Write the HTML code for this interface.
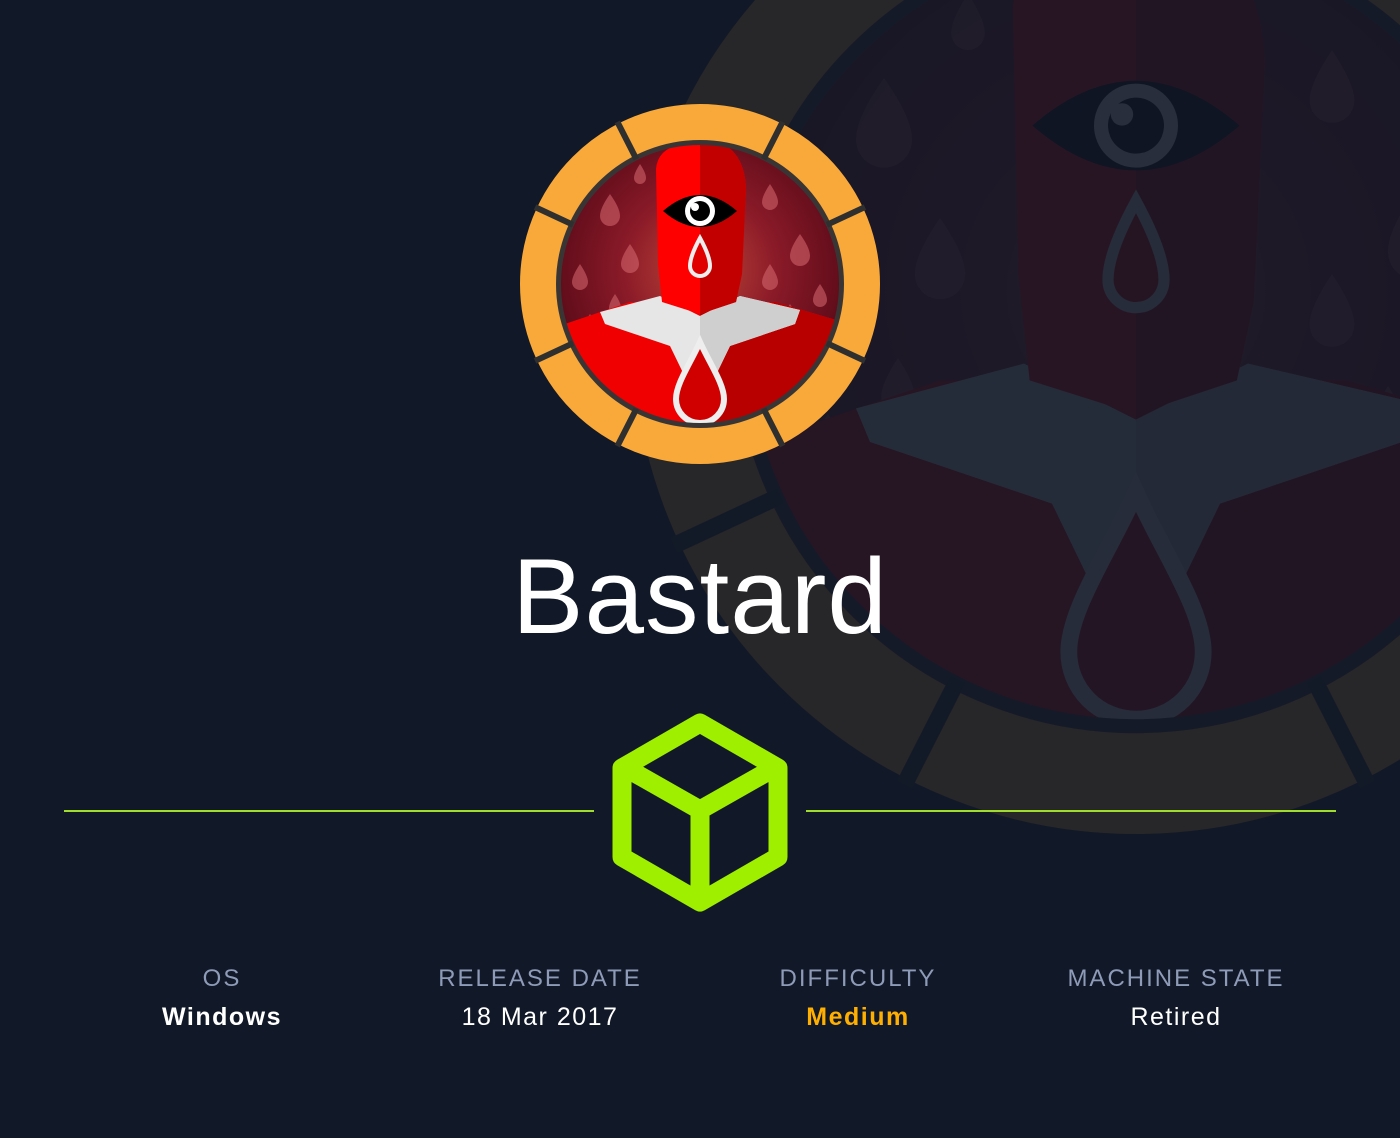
<!DOCTYPE html>
<html><head><meta charset="utf-8"><style>
html,body{margin:0;padding:0;}
body{width:1400px;height:1138px;background:#111827;position:relative;overflow:hidden;font-family:"Liberation Sans",sans-serif;}
.abs{position:absolute;}
.title{left:0;width:1400px;top:536px;text-align:center;font-size:107px;color:#fff;letter-spacing:1px;line-height:120px;}
.line{height:2px;background:#9fdc2c;top:810px;}
.col{position:absolute;width:320px;text-align:center;top:964px;}
.lab{font-size:24px;letter-spacing:2px;color:#8e9bb8;line-height:30px;}
.val{font-size:25px;letter-spacing:1.5px;color:#fff;font-weight:bold;line-height:30px;margin-top:8px;}
</style></head><body>
<svg width="0" height="0" style="position:absolute">
<defs>
<radialGradient id="bgg" cx="50%" cy="45%" r="55%"><stop offset="0" stop-color="#c04838"/><stop offset="0.5" stop-color="#8a1a28"/><stop offset="1" stop-color="#5a0a18"/></radialGradient>
<clipPath id="clp"><circle r="140"/></clipPath>
<symbol id="av" viewBox="-180 -180 360 360">
<g clip-path="url(#clp)">
<circle r="140" fill="url(#bgg)"/>
<g fill="#d86a72" opacity="0.55">
<path d="M-90 -90 q-10 14 -10 22 a10 10 0 0 0 20 0 q0 -8 -10 -22z"/>
<path d="M-120 -20 q-8 12 -8 18 a8 8 0 0 0 16 0 q0 -6 -8 -18z"/>
<path d="M-70 -40 q-9 13 -9 20 a9 9 0 0 0 18 0 q0 -7 -9 -20z"/>
<path d="M-110 30 q-7 10 -7 16 a7 7 0 0 0 14 0 q0 -6 -7 -16z"/>
<path d="M-60 -120 q-6 9 -6 14 a6 6 0 0 0 12 0 q0 -5 -6 -14z"/>
<path d="M70 -100 q-8 12 -8 18 a8 8 0 0 0 16 0 q0 -6 -8 -18z"/>
<path d="M100 -50 q-10 14 -10 22 a10 10 0 0 0 20 0 q0 -8 -10 -22z"/>
<path d="M70 -20 q-8 12 -8 18 a8 8 0 0 0 16 0 q0 -6 -8 -18z"/>
<path d="M120 0 q-7 10 -7 16 a7 7 0 0 0 14 0 q0 -6 -7 -16z"/>
<path d="M90 20 q-6 9 -6 14 a6 6 0 0 0 12 0 q0 -5 -6 -14z"/>
<path d="M-85 10 q-6 9 -6 14 a6 6 0 0 0 12 0 q0 -5 -6 -14z"/>
</g>
<path d="M-150 45 L-70 18 L75 18 L150 40 L170 170 L-170 170Z" fill="#f00000"/>
<path d="M0 25 L75 18 L150 40 L170 170 L0 170Z" fill="#b80000"/>
<path d="M-100 28 L-40 12 L0 32 L40 12 L100 26 L95 40 L30 62 L14 95 L-14 95 L-30 62 L-95 40Z" fill="#e6e6e6"/>
<path d="M0 32 L40 12 L100 26 L95 40 L30 62 L14 95 L0 95Z" fill="#cfcfcf"/>
<path d="M-44 -115 Q-42 -140 -5 -142 L20 -142 Q45 -130 46 -95 L42 -10 L36 18 L0 30 L-38 18 L-42 -20Z" fill="#ff0000"/>
<path d="M0 -142 L20 -142 Q45 -130 46 -95 L42 -10 L36 18 L0 30Z" fill="#c20000"/>
<path d="M-37 -73 Q0 -105 37 -73 Q0 -41 -37 -73Z" fill="#000"/>
<circle cx="0" cy="-73" r="15" fill="#fff"/>
<circle cx="0" cy="-73" r="10" fill="#000"/>
<circle cx="-5" cy="-77" r="4" fill="#fff"/>
<path d="M0 -46 C-6 -35 -10 -25 -10 -18 A10 10 0 0 0 10 -18 C10 -25 6 -35 0 -46Z" fill="#e00000" stroke="#eee" stroke-width="4"/>
<path d="M0 58 C-10 80 -24 100 -24 115 A24 24 0 0 0 24 115 C24 100 10 80 0 58Z" fill="#d00000" stroke="#eee" stroke-width="6"/>
</g>
<circle r="143" fill="none" stroke="#3a3535" stroke-width="8"/>
<circle r="162" fill="none" stroke="#f8a93a" stroke-width="36"/>
<g stroke="#2f2f2f" stroke-width="6">
<line x1="0" y1="-182" x2="0" y2="-140" transform="rotate(-27)"/>
<line x1="0" y1="-182" x2="0" y2="-140" transform="rotate(27)"/>
<line x1="0" y1="-182" x2="0" y2="-140" transform="rotate(65)"/>
<line x1="0" y1="-182" x2="0" y2="-140" transform="rotate(115)"/>
<line x1="0" y1="-182" x2="0" y2="-140" transform="rotate(153)"/>
<line x1="0" y1="-182" x2="0" y2="-140" transform="rotate(207)"/>
<line x1="0" y1="-182" x2="0" y2="-140" transform="rotate(245)"/>
<line x1="0" y1="-182" x2="0" y2="-140" transform="rotate(295)"/>
</g>
</symbol>
</defs>
</svg>
<svg class="abs" style="left:0;top:0" width="1400" height="1138">
<use href="#av" x="632" y="-174" width="1008" height="1008" opacity="0.095"/>
<use href="#av" x="520" y="104" width="360" height="360"/>
</svg>
<div class="abs title">Bastard</div>
<div class="abs line" style="left:64px;width:530px;"></div>
<div class="abs line" style="left:806px;width:530px;"></div>
<svg class="abs" style="left:600px;top:700px" width="200" height="220" viewBox="600 700 200 220">
<path d="M700 723 L778 768 L778 857 L700 902 L622 857 L622 768Z" fill="none" stroke="#9fef00" stroke-width="19" stroke-linejoin="round"/>
<path d="M626 768 L700 810 L774 768 M700 810 L700 900" fill="none" stroke="#9fef00" stroke-width="19" stroke-linejoin="round"/>
</svg>
<div class="col" style="left:62px"><div class="lab">OS</div><div class="val">Windows</div></div>
<div class="col" style="left:380px"><div class="lab">RELEASE DATE</div><div class="val" style="font-weight:normal">18 Mar 2017</div></div>
<div class="col" style="left:698px"><div class="lab">DIFFICULTY</div><div class="val" style="color:#ffaf00">Medium</div></div>
<div class="col" style="left:1016px"><div class="lab">MACHINE STATE</div><div class="val" style="font-weight:normal">Retired</div></div>
</body></html>
